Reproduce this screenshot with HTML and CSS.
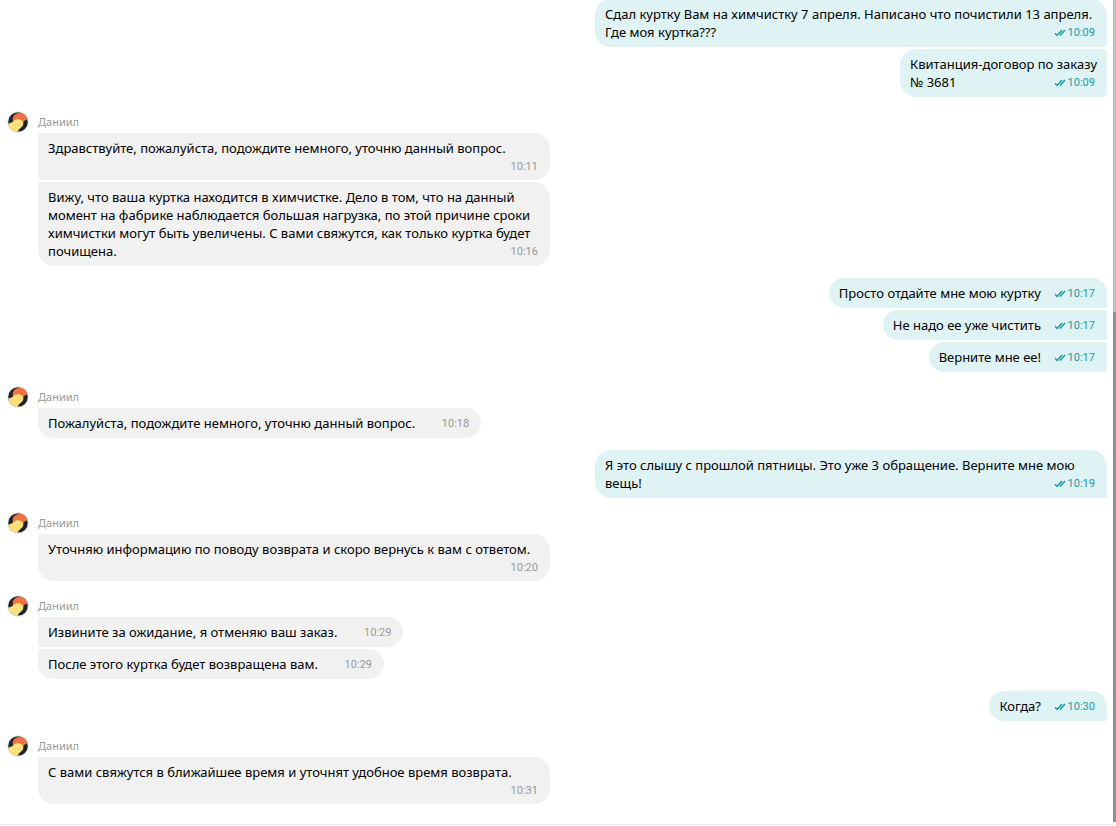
FILE: index.html
```
<!DOCTYPE html>
<html lang="ru">
<head>
<meta charset="utf-8">
<title>Чат</title>
<link rel="stylesheet" href="styles.css">
</head>
<body>
<svg class="defs" aria-hidden="true">
  <symbol id="avatar" viewBox="0 0 22 22">
    <circle cx="11" cy="11" r="10.5" fill="#fff" stroke="#ececec"/>
    <circle cx="11" cy="11" r="9.800" fill="#20222a"/>
    <path d="M6 10C4.500 6 8 2.500 12 1.800C16 1.500 19.500 4 20.500 8.500C18.500 8.500 17 9.500 16 12.500Z" fill="#ee7445"/>
    <path d="M1.300 12.500C5.500 12.500 6.500 8.500 10.500 8.300C14 8 16.800 10.500 16.300 13.500C15.500 16.800 11.500 17 11 20.800C6 20.800 2 17.500 1.300 12.500Z" fill="#fbdf78"/>
  </symbol>
  <symbol id="ticks" viewBox="0 0 12 8">
    <path d="M1 4.300L3.200 6.500L8 1M6 6.500L11 1" fill="none" stroke="#1a9aaa" stroke-width="1.500"/>
  </symbol>
</svg>
<div class="chat">
  <main class="log">
    <section class="group out">
      <p class="bubble full">Сдал куртку Вам на химчистку 7 апреля. Написано что почистили 13 апреля.<br>Где моя куртка???<span class="meta"><svg class="ticks"><use href="#ticks"/></svg><time>10:09</time></span></p>
      <p class="bubble">Квитанция-договор по заказу<br>№ 3681<span class="meta"><svg class="ticks"><use href="#ticks"/></svg><time>10:09</time></span></p>
    </section>
    <section class="group in">
      <header class="author"><svg class="avatar"><use href="#avatar"/></svg><span>Даниил</span></header>
      <p class="bubble">Здравствуйте, пожалуйста, подождите немного, уточню данный вопрос.<span class="meta"><time>10:11</time></span></p>
      <p class="bubble">Вижу, что ваша куртка находится в химчистке. Дело в том, что на данный момент на фабрике наблюдается большая нагрузка, по этой причине сроки химчистки могут быть увеличены. С вами свяжутся, как только куртка будет почищена.<span class="meta"><time>10:16</time></span></p>
    </section>
    <section class="group out">
      <p class="bubble">Просто отдайте мне мою куртку<span class="meta"><svg class="ticks"><use href="#ticks"/></svg><time>10:17</time></span></p>
      <p class="bubble">Не надо ее уже чистить<span class="meta"><svg class="ticks"><use href="#ticks"/></svg><time>10:17</time></span></p>
      <p class="bubble">Верните мне ее!<span class="meta"><svg class="ticks"><use href="#ticks"/></svg><time>10:17</time></span></p>
    </section>
    <section class="group in">
      <header class="author"><svg class="avatar"><use href="#avatar"/></svg><span>Даниил</span></header>
      <p class="bubble">Пожалуйста, подождите немного, уточню данный вопрос.<span class="meta"><time>10:18</time></span></p>
    </section>
    <section class="group out">
      <p class="bubble">Я это слышу с прошлой пятницы. Это уже 3 обращение. Верните мне мою вещь!<span class="meta"><svg class="ticks"><use href="#ticks"/></svg><time>10:19</time></span></p>
    </section>
    <section class="group in">
      <header class="author"><svg class="avatar"><use href="#avatar"/></svg><span>Даниил</span></header>
      <p class="bubble">Уточняю информацию по поводу возврата и скоро вернусь к вам с ответом.<span class="meta"><time>10:20</time></span></p>
    </section>
    <section class="group in">
      <header class="author"><svg class="avatar"><use href="#avatar"/></svg><span>Даниил</span></header>
      <p class="bubble">Извините за ожидание, я отменяю ваш заказ.<span class="meta"><time>10:29</time></span></p>
      <p class="bubble">После этого куртка будет возвращена вам.<span class="meta"><time>10:29</time></span></p>
    </section>
    <section class="group out">
      <p class="bubble">Когда?<span class="meta"><svg class="ticks"><use href="#ticks"/></svg><time>10:30</time></span></p>
    </section>
    <section class="group in">
      <header class="author"><svg class="avatar"><use href="#avatar"/></svg><span>Даниил</span></header>
      <p class="bubble">С вами свяжутся в ближайшее время и уточнят удобное время возврата.<span class="meta"><time>10:31</time></span></p>
    </section>
  </main>
  <div class="scrollbar"><div class="thumb"></div></div>
</div>
</body>
</html>
```
FILE: styles.css
```
* { box-sizing: border-box; }
body {
  margin: 0;
  background: #fff;
  color: #000;
  font: 13px/18px "Noto Sans", "Open Sans", sans-serif;
}
.defs { display: block; width: 0; height: 0; }
.chat {
  display: flex;
  height: 100vh;
  overflow: hidden;
  padding-bottom: 4px;
  background: linear-gradient(#ececec, #ececec) 0 calc(100% - 1px) / 100% 1px no-repeat;
}
.log {
  flex: 1;
  display: flex;
  flex-direction: column;
  justify-content: flex-end;
  gap: 12px;
  padding: 0 6px 18px 38px;
}
.group {
  display: flex;
  flex-direction: column;
  gap: 2px;
}
.out { align-items: flex-end; }
.in { align-items: flex-start; }
.bubble {
  display: flow-root;
  max-width: 512px;
  margin: 0;
  padding: 6px 10px;
  border-radius: 16px;
}
.full { width: 100%; }
.out .bubble {
  background: #dff3f5;
  border-radius: 16px 3px 3px 16px;
}
.out .bubble:first-of-type { border-top-right-radius: 16px; }
.in .bubble {
  background: #f1f1f1;
  border-radius: 3px 16px 16px 3px;
}
.in .bubble:last-of-type { border-bottom-left-radius: 16px; }
.meta {
  float: right;
  display: flex;
  justify-content: flex-end;
  align-items: center;
  gap: 2px;
  width: 56px;
  height: 17px;
  padding: 3px 2px 0 0;
  font: 11px/14px Roboto, "Open Sans", sans-serif;
  color: #999;
}
.out .meta { color: #1a9aaa; }
.ticks { width: 12px; height: 8px; }
.author {
  display: flex;
  align-items: center;
  gap: 9px;
  height: 22px;
  margin-left: -31px;
  padding-top: 4px;
  font-size: 11px;
  color: #999;
}
.avatar { flex: none; width: 22px; height: 22px; }
.scrollbar {
  display: flex;
  flex-direction: column;
  justify-content: flex-end;
  width: 3px;
  background: #c1c1c1;
}
.thumb { height: 62%; background: #8f8f8f; }
```
